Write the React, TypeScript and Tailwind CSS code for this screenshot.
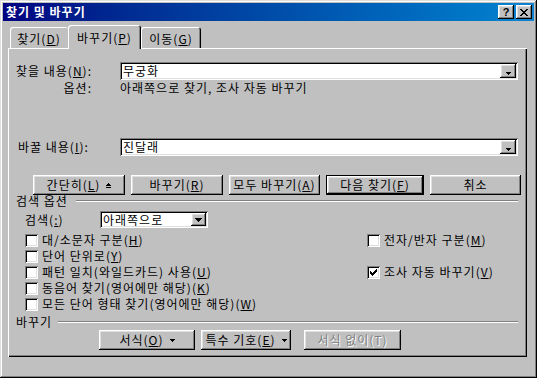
import React from "react";

const RAISED =
  "bg-[#c0c0c0] shadow-[inset_-1px_-1px_#000000,inset_1px_1px_#ffffff,inset_-2px_-2px_#808080,inset_2px_2px_#dfdfdf]";
const SUNKEN =
  "bg-white shadow-[inset_1px_1px_#808080,inset_-1px_-1px_#ffffff,inset_2px_2px_#000000,inset_-2px_-2px_#dfdfdf]";

function Key({ k }: { k: string }) {
  return <u className="underline underline-offset-[1px]">{k}</u>;
}

function DownSmall() {
  return (
    <svg width="5" height="3" viewBox="0 0 5 3" shapeRendering="crispEdges">
      <path d="M0 0h5v1h-1v1h-1v1h-1v-1h-1v-1h-1z" fill="#000" />
    </svg>
  );
}

function DownBig() {
  return (
    <svg width="7" height="4" viewBox="0 0 7 4" shapeRendering="crispEdges">
      <path d="M0 0h7v1h-1v1h-1v1h-1v1h-1v-1h-1v-1h-1v-1h-1z" fill="#000" />
    </svg>
  );
}

function UpBar() {
  return (
    <svg width="5" height="5" viewBox="0 0 5 5" shapeRendering="crispEdges">
      <path d="M2 0h1v1h1v1h1v1h-5v-1h1v-1h1z M0 4h5v1h-5z" fill="#000" />
    </svg>
  );
}

function Button({
  className,
  children,
  isDefault,
  disabled,
}: {
  className: string;
  children: React.ReactNode;
  isDefault?: boolean;
  disabled?: boolean;
}) {
  return (
    <div className={`${className} h-[20px] ${isDefault ? "border border-black" : ""}`}>
      <div
        className={`${RAISED} h-full flex items-center justify-center gap-[6px] ${
          disabled ? "text-[#808080] [text-shadow:1px_1px_0_#ffffff]" : ""
        }`}
      >
        {children}
      </div>
    </div>
  );
}

function Combo({ value }: { value: string }) {
  return (
    <div className={`${SUNKEN} w-[398px] h-[18px] flex items-center p-[2px]`}>
      <span className="flex-1 pl-[1px]">{value}</span>
      <div className={`${RAISED} w-[16px] h-[14px] flex justify-center pt-[8px]`}>
        <DownSmall />
      </div>
    </div>
  );
}

function Check({ checked, children }: { checked?: boolean; children: React.ReactNode }) {
  return (
    <div className="flex items-center">
      <div className={`${SUNKEN} w-[13px] h-[13px] flex items-center justify-center`}>
        {checked && (
          <svg width="7" height="7" viewBox="0 0 7 7" shapeRendering="crispEdges">
            <path
              d="M6 0h1v3h-1v1h-1v1h-1v1h-1v1h-1v-1h-1v-1h-1v-3h1v1h1v1h1v-1h1v-1h1z"
              fill="#000"
            />
          </svg>
        )}
      </div>
      <span className="ml-[4px]">{children}</span>
    </div>
  );
}

function Header({ label, gap }: { label: string; gap: string }) {
  return (
    <div className="h-[12px] flex items-center pl-[8px] pr-[9px]">
      <span>{label}</span>
      <div className={`${gap} flex-1 h-[2px] border-t border-t-[#808080] border-b border-b-white`} />
    </div>
  );
}

export default function App() {
  return (
    <div className="w-[537px] h-[378px] bg-[#c0c0c0] p-[3px] shadow-[inset_-1px_-1px_#000000,inset_1px_1px_#dfdfdf,inset_-2px_-2px_#808080,inset_2px_2px_#ffffff] font-['Noto_Sans_CJK_KR','Noto_Sans_CJK_SC',sans-serif] text-[12px] leading-[14px] tracking-[1px] text-black overflow-hidden">
      {/* title bar */}
      <div className="h-[18px] flex items-center bg-gradient-to-r from-[#000080] to-[#1084d0] pl-[3px] pr-[2px]">
        <span className="font-bold text-white">찾기 및 바꾸기</span>
        <div className="ml-auto flex gap-[2px] tracking-normal">
          <div className={`${RAISED} w-[16px] h-[14px] flex items-center justify-center font-['Liberation_Sans',sans-serif] font-bold text-[11px] leading-none`}>
            ?
          </div>
          <div className={`${RAISED} w-[16px] h-[14px] flex items-center justify-center`}>
            <svg width="8" height="7" viewBox="0 0 8 7" shapeRendering="crispEdges">
              <path
                d="M0 0h2v1h1v1h2v-1h1v-1h2v1h-1v1h-1v1h-1v1h1v1h1v1h1v1h-2v-1h-1v-1h-2v1h-1v1h-2v-1h1v-1h1v-1h1v-1h-1v-1h-1v-1h-1z"
                fill="#000"
              />
            </svg>
          </div>
        </div>
      </div>

      {/* tabs */}
      <div className="flex items-end h-[27px] ml-[7px]">
        <div className="w-[58px] h-[21px] rounded-t-[3px] shadow-[inset_1px_1px_#ffffff] flex items-center justify-center pt-[2px]">
          찾기(<Key k="D" />)
        </div>
        <div className="w-[73px] h-[24px] -mb-[1px] relative z-10 bg-[#c0c0c0] rounded-t-[3px] shadow-[inset_1px_1px_#ffffff,inset_-1px_0_#000000,inset_-2px_0_#808080] flex items-center justify-center pt-[1px]">
          바꾸기(<Key k="P" />)
        </div>
        <div className="w-[60px] h-[21px] rounded-t-[3px] shadow-[inset_1px_1px_#ffffff,inset_-1px_0_#000000,inset_-2px_0_#808080] flex items-center justify-center pt-[2px]">
          이동(<Key k="G" />)
        </div>
      </div>

      {/* panel */}
      <div className="ml-[5px] w-[519px] h-[309px] shadow-[inset_1px_1px_#ffffff,inset_-1px_-1px_#000000,inset_-2px_-2px_#808080] flex flex-col">
        <div className="mt-[14px] h-[18px] flex items-center">
          <span className="w-[112px] pl-[8px]">
            찾을 내용(<Key k="N" />):
          </span>
          <Combo value="무궁화" />
        </div>
        <div className="h-[16px] flex items-center">
          <span className="w-[84px] text-right">옵션:</span>
          <span className="ml-[28px]">아래쪽으로 찾기, 조사 자동 바꾸기</span>
        </div>

        <div className="mt-[42px] h-[18px] flex items-center">
          <span className="w-[112px] pl-[10px]">
            바꿀 내용(<Key k="I" />):
          </span>
          <Combo value="진달래" />
        </div>

        <div className="mt-[19px] h-[20px] flex gap-[6px] pl-[25px]">
          <Button className="w-[92px]">
            <span>
              간단히(<Key k="L" />)
            </span>
            <UpBar />
          </Button>
          <Button className="w-[92px]">
            <span>
              바꾸기(<Key k="R" />)
            </span>
          </Button>
          <Button className="w-[91px]">
            <span>
              모두 바꾸기(<Key k="A" />)
            </span>
          </Button>
          <Button className="w-[98px]" isDefault>
            <span>
              다음 찾기(<Key k="F" />)
            </span>
          </Button>
          <Button className="w-[91px]">
            <span>취소</span>
          </Button>
        </div>

        <Header label="검색 옵션" gap="ml-[8px]" />

        <div className="mt-[4px] h-[17px] flex items-center pl-[17px]">
          <span className="w-[75px]">
            검색(<Key k=":" />)
          </span>
          <div className={`${SUNKEN} w-[108px] h-[17px] flex items-center p-[2px]`}>
            <span className="flex-1 pl-[1px]">아래쪽으로</span>
            <div className={`${RAISED} w-[15px] h-[13px] flex items-center justify-center`}>
              <DownBig />
            </div>
          </div>
        </div>

        <div className="mt-[4px] flex flex-col">
          <div className="h-[16px] flex items-center pl-[17px]">
            <div className="w-[342px]">
              <Check>
                대/소문자 구분(<Key k="H" />)
              </Check>
            </div>
            <Check>
              전자/반자 구분(<Key k="M" />)
            </Check>
          </div>
          <div className="h-[16px] flex items-center pl-[17px]">
            <Check>
              단어 단위로(<Key k="Y" />)
            </Check>
          </div>
          <div className="h-[16px] flex items-center pl-[17px]">
            <div className="w-[342px]">
              <Check>
                패턴 일치(와일드카드) 사용(<Key k="U" />)
              </Check>
            </div>
            <Check checked>
              조사 자동 바꾸기(<Key k="V" />)
            </Check>
          </div>
          <div className="h-[16px] flex items-center pl-[17px]">
            <Check>
              동음어 찾기(영어에만 해당)(<Key k="K" />)
            </Check>
          </div>
          <div className="h-[16px] flex items-center pl-[17px]">
            <Check>
              모든 단어 형태 찾기(영어에만 해당)(<Key k="W" />)
            </Check>
          </div>
        </div>

        <div className="mt-[4px]">
          <Header label="바꾸기" gap="ml-[6px]" />
        </div>

        <div className="mt-[2px] h-[20px] flex pl-[91px]">
          <Button className="w-[96px]">
            <span>
              서식(<Key k="O" />)
            </span>
            <DownSmall />
          </Button>
          <Button className="w-[90px] ml-[6px]">
            <span>
              특수 기호(<Key k="E" />)
            </span>
            <DownSmall />
          </Button>
          <Button className="w-[97px] ml-[13px]" disabled>
            <span>서식 없이(T)</span>
          </Button>
        </div>
      </div>
    </div>
  );
}
